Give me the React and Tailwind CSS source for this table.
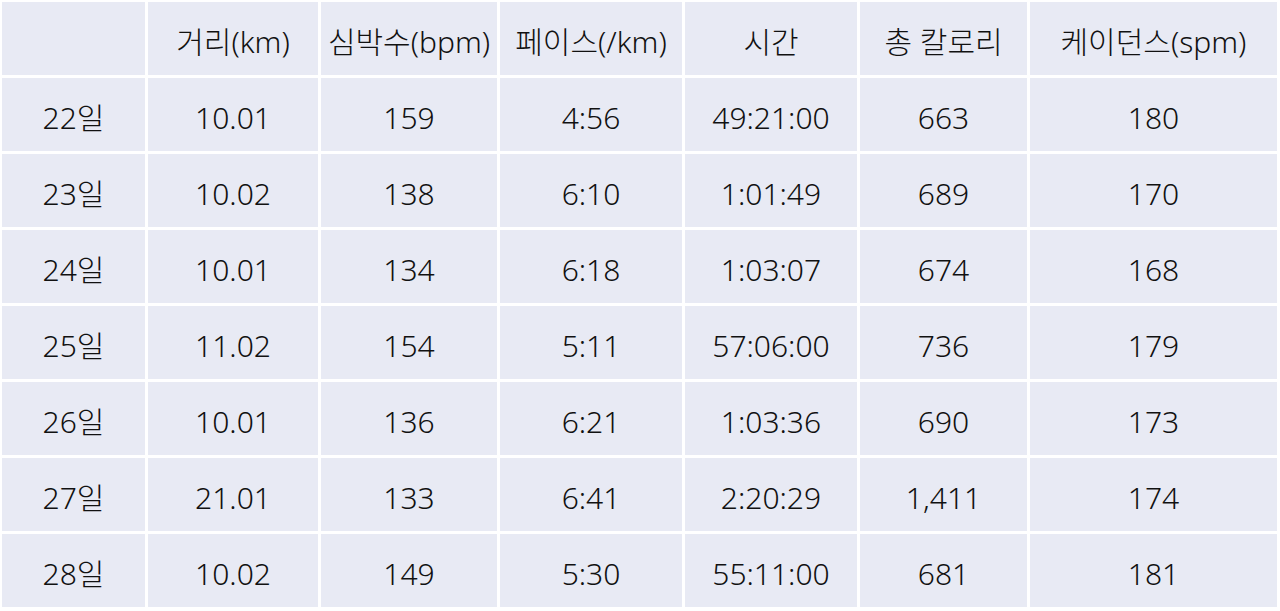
const headers = ["", "거리(km)", "심박수(bpm)", "페이스(/km)", "시간", "총 칼로리", "케이던스(spm)"];

const rows = [
  ["22일", "10.01", "159", "4:56", "49:21:00", "663", "180"],
  ["23일", "10.02", "138", "6:10", "1:01:49", "689", "170"],
  ["24일", "10.01", "134", "6:18", "1:03:07", "674", "168"],
  ["25일", "11.02", "154", "5:11", "57:06:00", "736", "179"],
  ["26일", "10.01", "136", "6:21", "1:03:36", "690", "173"],
  ["27일", "21.01", "133", "6:41", "2:20:29", "1,411", "174"],
  ["28일", "10.02", "149", "5:30", "55:11:00", "681", "181"],
];

function Cell({ children }) {
  return (
    <div className="flex items-center justify-center whitespace-nowrap bg-[#e8eaf4] pt-[6px] text-[30px] font-light leading-none text-[#111]">
      {children}
    </div>
  );
}

export default function App() {
  return (
    <div
      className="h-[611px] w-[1280px] overflow-hidden bg-white pl-[2px] pt-[2px]"
      style={{ fontFamily: '"Noto Sans", "Noto Sans CJK KR", sans-serif' }}
    >
      <div className="grid grid-cols-[143px_170px_176px_182px_172px_167px_247px] auto-rows-[73px] gap-[3px]">
        {headers.map((h, i) => (
          <Cell key={`h-${i}`}>{h}</Cell>
        ))}
        {rows.map((row) =>
          row.map((value, i) => <Cell key={`${row[0]}-${i}`}>{value}</Cell>)
        )}
      </div>
    </div>
  );
}
